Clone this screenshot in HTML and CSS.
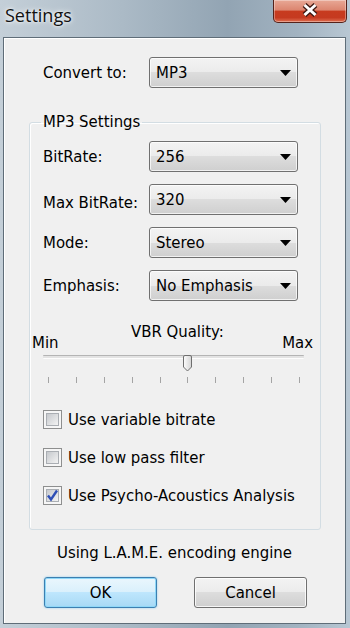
FILE: index.html
```html
<!DOCTYPE html>
<html lang="en">
<head>
    <meta charset="UTF-8">
    <meta name="viewport" content="width=device-width, initial-scale=1.0">
    <title>Settings</title>
    <link rel="stylesheet" href="styles.css">
</head>
<body>
    <div class="window">
        <div class="titlebar">
            <span class="title">Settings</span>
            <button class="close-btn" aria-label="Close">
                <svg width="18" height="14" viewBox="0 0 18 14">
                    <path d="M3.5 2 L14.5 12 M14.5 2 L3.5 12" stroke="#3b1710" stroke-width="5.5"/>
                    <path d="M3.5 2 L14.5 12 M14.5 2 L3.5 12" stroke="#fff" stroke-width="3"/>
                </svg>
            </button>
        </div>

        <div class="client">
            <div class="field-row convert-row">
                <label class="field-label">Convert to:</label>
                <div class="combo">
                    <span>MP3</span>
                    <svg class="combo-arrow" width="11" height="6" viewBox="0 0 11 6"><polygon points="0,0 11,0 5.5,6"/></svg>
                </div>
            </div>

            <fieldset class="group">
                <legend class="group-legend">MP3 Settings</legend>

                <div class="field-list">
                    <div class="field-row">
                        <label class="field-label">BitRate:</label>
                        <div class="combo">
                            <span>256</span>
                            <svg class="combo-arrow" width="11" height="6" viewBox="0 0 11 6"><polygon points="0,0 11,0 5.5,6"/></svg>
                        </div>
                    </div>
                    <div class="field-row">
                        <label class="field-label label-low">Max BitRate:</label>
                        <div class="combo">
                            <span>320</span>
                            <svg class="combo-arrow" width="11" height="6" viewBox="0 0 11 6"><polygon points="0,0 11,0 5.5,6"/></svg>
                        </div>
                    </div>
                    <div class="field-row">
                        <label class="field-label">Mode:</label>
                        <div class="combo">
                            <span>Stereo</span>
                            <svg class="combo-arrow" width="11" height="6" viewBox="0 0 11 6"><polygon points="0,0 11,0 5.5,6"/></svg>
                        </div>
                    </div>
                    <div class="field-row">
                        <label class="field-label">Emphasis:</label>
                        <div class="combo">
                            <span>No Emphasis</span>
                            <svg class="combo-arrow" width="11" height="6" viewBox="0 0 11 6"><polygon points="0,0 11,0 5.5,6"/></svg>
                        </div>
                    </div>
                </div>

                <div class="vbr">
                    <div class="vbr-labels">
                        <span class="vbr-min">Min</span>
                        <span class="vbr-title">VBR Quality:</span>
                        <span class="vbr-max">Max</span>
                    </div>
                    <div class="slider">
                        <div class="slider-track"></div>
                        <!-- value 5 of 0..9 -->
                        <svg class="slider-thumb" style="left: calc(5px + (100% - 10px) * 0.5556 - 4.5px)" width="9" height="17" viewBox="0 0 9 17">
                            <defs>
                                <linearGradient id="thumb-fill" x1="0" y1="0" x2="1" y2="0">
                                    <stop offset="0" stop-color="#fdfdfd"/>
                                    <stop offset="1" stop-color="#d4d4d4"/>
                                </linearGradient>
                            </defs>
                            <path d="M2 0.5 H7 A1.5 1.5 0 0 1 8.5 2 V12 L4.5 16 L0.5 12 V2 A1.5 1.5 0 0 1 2 0.5 Z" fill="url(#thumb-fill)" stroke="#6e6e6e"/>
                        </svg>
                    </div>
                    <div class="ticks">
                        <span></span><span></span><span></span><span></span><span></span>
                        <span></span><span></span><span></span><span></span><span></span>
                    </div>
                </div>

                <div class="check-list">
                    <div class="check-row">
                        <span class="checkbox"></span>
                        <span>Use variable bitrate</span>
                    </div>
                    <div class="check-row">
                        <span class="checkbox"></span>
                        <span>Use low pass filter</span>
                    </div>
                    <div class="check-row">
                        <span class="checkbox">
                            <svg width="15" height="15" viewBox="0 0 15 15"><path d="M3 7.5 L6 11.5 L12 2.5" fill="none" stroke="#2e4fb6" stroke-width="2.4"/></svg>
                        </span>
                        <span>Use Psycho-Acoustics Analysis</span>
                    </div>
                </div>
            </fieldset>

            <p class="engine-note">Using L.A.M.E. encoding engine</p>

            <div class="buttons">
                <button class="btn btn-default">OK</button>
                <button class="btn">Cancel</button>
            </div>
        </div>
    </div>
</body>
</html>
```

FILE: styles.css
```css
* {
    box-sizing: border-box;
}

body {
    margin: 0;
    background-color: #a9bac7;
    font-family: "DejaVu Sans Condensed", "DejaVu Sans", sans-serif;
    font-stretch: condensed;
    font-size: 16.6px;
    color: #000;
}

.window {
    width: 350px;
    height: 628px;
    display: flex;
    flex-direction: column;
    padding: 0 4px 4px 3px;
    background: linear-gradient(to right, #c4cfd8, #abbac6 35%, #92a4b3 65%, #a2b3c1 85%, #b8c7d3);
}

/* タイトルバー */
.titlebar {
    height: 37px;
    display: flex;
    justify-content: space-between;
    align-items: flex-start;
    margin: 0 -4px 0 -3px;
    padding: 0 3px 0 5px;
}

.title {
    font-family: "Open Sans", sans-serif;
    font-stretch: normal;
    font-size: 18px;
    line-height: 30px;
    color: #111;
    text-shadow: 0 0 6px #fff, 0 0 3px #fff;
}

.close-btn {
    width: 74px;
    height: 23px;
    padding: 0 0 3px;
    display: flex;
    align-items: center;
    justify-content: center;
    border: 1px solid #55221a;
    border-top: none;
    border-radius: 0 0 5px 5px;
    background: linear-gradient(#e8a896, #dc8670 45%, #c73b1f 52%, #c53a20 80%, #df7052);
    box-shadow: inset 0 0 0 1px rgba(255, 255, 255, 0.35);
}

/* クライアント領域 */
.client {
    flex: 1;
    display: flex;
    flex-direction: column;
    background-color: #f0f0f0;
    border: 1px solid #5f6d78;
    box-shadow: inset 1px 1px 0 #fff;
}

.convert-row {
    margin: 19px 0 0 39px;
}

.field-row {
    display: flex;
    align-items: center;
    height: 31px;
}

.field-label {
    width: 106px;
    flex: none;
}

.label-low {
    padding-top: 6px;
}

.combo {
    width: 149px;
    height: 31px;
    display: flex;
    align-items: center;
    justify-content: space-between;
    padding: 0 6px 0 6px;
    border: 1px solid #707070;
    border-radius: 3px;
    background: linear-gradient(#f3f3f3, #ebebeb 50%, #dddddd 50%, #cfcfcf);
    box-shadow: inset 0 0 0 1px rgba(255, 255, 255, 0.7);
}

.combo-arrow {
    fill: #000;
}

/* MP3 Settings グループ */
.group {
    margin: 25px 24px 0 25px;
    padding: 10px 13px 24px;
    border: 1px solid #d3dde3;
    border-radius: 3px;
    box-shadow: inset 1px 1px 0 #fff;
    min-width: 0;
}

.group-legend {
    padding: 0 2px;
    margin-left: -2px;
    line-height: 18px;
}

.field-list {
    display: flex;
    flex-direction: column;
    gap: 12px;
}

.vbr {
    margin: 22px -6px 0 -11px;
}

.vbr-labels {
    display: grid;
    grid-template-columns: auto 1fr auto;
    height: 29px;
    line-height: 18px;
}

.vbr-min,
.vbr-max {
    align-self: end;
}

.vbr-title {
    text-align: center;
    padding-left: 14px;
}

.slider {
    position: relative;
    height: 17px;
    margin: -1px 9px 0 11px;
}

.slider-track {
    height: 4px;
    margin-top: 4px;
    border-top: 1px solid #b4b4b4;
    border-bottom: 1px solid #fdfdfd;
    background-color: #e3e3e3;
    border-radius: 1px;
}

.slider-thumb {
    position: absolute;
    top: 0;
}

.ticks {
    display: flex;
    justify-content: space-between;
    margin: 5px 13px 0 16px;
}

.ticks span {
    width: 1px;
    height: 6px;
    background-color: #a4a4a4;
}

/* チェックボックス */
.check-list {
    margin-top: 27px;
    display: flex;
    flex-direction: column;
    gap: 19px;
}

.check-row {
    display: flex;
    align-items: center;
    gap: 6px;
    height: 19px;
}

.checkbox {
    width: 19px;
    height: 19px;
    flex: none;
    display: flex;
    align-items: center;
    justify-content: center;
    border: 1px solid #8e8f8f;
    background:
        linear-gradient(135deg, #c6c9cd, #f3f3f3) center / 11px 11px no-repeat,
        linear-gradient(#aaaeb3, #aaaeb3) center / 13px 13px no-repeat,
        #f6f6f6;
}

.engine-note {
    margin: 14px 0 0;
    text-align: center;
    line-height: 18px;
}

/* ボタン */
.buttons {
    display: flex;
    gap: 37px;
    margin: 15px 0 0 40px;
}

.btn {
    width: 113px;
    height: 31px;
    padding: 0;
    font: inherit;
    color: #000;
    border: 1px solid #707070;
    border-radius: 3px;
    background: linear-gradient(#f3f3f3, #ebebeb 50%, #dddddd 50%, #cfcfcf);
    box-shadow: inset 0 0 0 1px rgba(255, 255, 255, 0.8);
}

.btn-default {
    border-color: #3c7fb1;
    background: linear-gradient(#eaf6fd, #d9f0fc 50%, #bee6fd 50%, #a7d9f5);
    box-shadow: inset 0 0 0 1px #8fd8f8, 0 0 2px #7fc9ee;
}
```
